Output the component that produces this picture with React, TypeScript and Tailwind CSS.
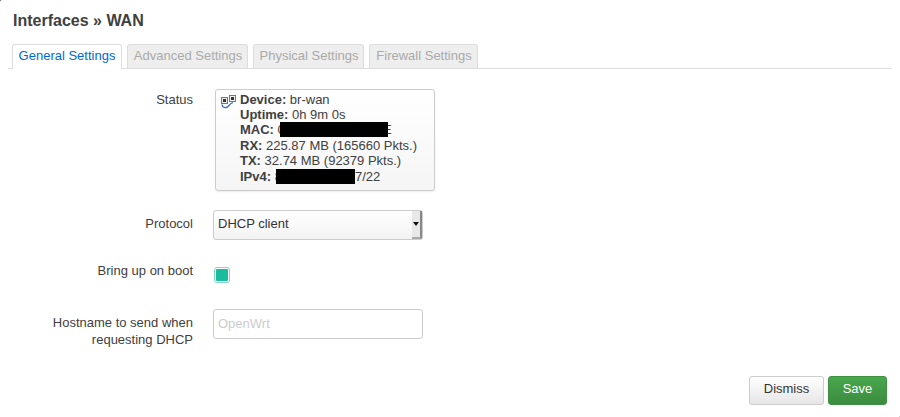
const labelClass = "w-[193px] shrink-0 text-right text-[#404040]";

const tabs = [
  { name: "Advanced Settings", width: "w-[121px]" },
  { name: "Physical Settings", width: "w-[111px]" },
  { name: "Firewall Settings", width: "w-[109px]" },
];

const NetIcon = () => (
  <svg width="16" height="16" viewBox="0 0 16 16" className="shrink-0">
    <rect x="0.5" y="3.5" width="6" height="6" fill="#e8e8e8" stroke="#777" />
    <rect x="2" y="5" width="3" height="3" fill="#333" />
    <rect x="8.5" y="1.5" width="6" height="6" fill="#f2f2f2" stroke="#777" />
    <rect x="10" y="3" width="3" height="3" fill="#333" />
    <path d="M1 10.5 C1.5 14.5 6 14.5 8.5 11 C9.5 9.5 10.5 9 12 8.5" fill="none" stroke="#3a6fc4" strokeWidth="1.3" />
  </svg>
);

const Redacted = ({ className }: { className: string }) => (
  <span className={`absolute h-[15px] bg-black ${className}`} />
);

export default function App() {
  return (
    <div className="h-[417px] w-[900px] overflow-hidden bg-[#555]">
      <div className="h-[417px] w-[900px] rounded-tl-[2px] rounded-br-[1px] bg-white font-['Liberation_Sans',sans-serif] text-[13px] text-[#404040]">
        <div className="px-2 pt-[12px]">
          <h3 className="pl-[5px] text-[16px] leading-[17px] font-bold">Interfaces » WAN</h3>

          <div className="mt-[15px] flex h-[25px] items-end gap-[5px] border-b border-[#ddd] pl-1">
            <div className="-mb-px flex h-[25px] w-[110px] items-center justify-center rounded-t-[3px] border border-b-0 border-[#ddd] bg-white pb-[2px] text-[#0069d6]">
              General Settings
            </div>
            {tabs.map((tab) => (
              <div
                key={tab.name}
                className={`flex h-[24px] items-center justify-center rounded-t-[3px] border border-b-0 border-[#ddd] bg-[#eee] pb-[1px] pl-[1px] text-[#aaa] ${tab.width}`}
              >
                {tab.name}
              </div>
            ))}
          </div>
        </div>

        <div className="mt-[20px] flex items-start">
          <div className={`${labelClass} pt-[2px] leading-[18px]`}>Status</div>
          <div className="ml-[22px] flex h-[102px] w-[220px] gap-[3px] rounded-[3px] border border-[#ccc] bg-linear-to-b from-white to-[#f5f5f5] pl-[5px] shadow-[0_1px_2px_rgba(0,0,0,0.08)]">
            <div className="pt-[4px]">
              <NetIcon />
            </div>
            <div className="pt-[1.6px] leading-[15.4px]">
              <div>
                <b>Device:</b> br-wan
              </div>
              <div>
                <b>Uptime:</b> 0h 9m 0s
              </div>
              <div className="relative">
                <b>MAC:</b> 0
                <span className="absolute left-[143px] top-0">E</span>
                <Redacted className="left-[40px] top-0 w-[108px]" />
              </div>
              <div>
                <b>RX:</b> 225.87 MB (165660 Pkts.)
              </div>
              <div>
                <b>TX:</b> 32.74 MB (92379 Pkts.)
              </div>
              <div className="relative">
                <b>IPv4:</b> 8
                <Redacted className="left-[36px] top-0 w-[79px]" />
                <span className="absolute left-[115px] top-0">7/22</span>
              </div>
            </div>
          </div>
        </div>

        <div className="mt-[19px] flex items-center">
          <div className={`${labelClass} pb-[2px]`}>Protocol</div>
          <div className="ml-[20px] flex h-[30px] w-[210px] items-center rounded-[3px] border border-[#ccc] bg-linear-to-b from-white to-[#f3f3f3] pl-[4px] text-[#333]">
            <span className="flex-1 pb-[3px]">DHCP client</span>
            <span className="flex h-[28px] w-[10px] items-center justify-center border-r-2 border-b-2 border-r-[#888] border-b-[#aaa] bg-[#e8e8e8]">
              <svg width="6" height="4" viewBox="0 0 6 4">
                <path d="M0 0H6L3 4Z" fill="#111" />
              </svg>
            </span>
          </div>
        </div>

        <div className="mt-[22px] flex items-start">
          <div className={`${labelClass} pt-[1px] leading-[16px]`}>Bring up on boot</div>
          <div className="ml-[21px] mt-[5px] flex h-[16px] w-[16px] items-center justify-center rounded-[3px] border border-[#7fd8c6] bg-white">
            <span className="h-[12px] w-[12px] rounded-[1px] bg-[#1abc9c]" />
          </div>
        </div>

        <div className="mt-[26px] flex items-start">
          <div className={`${labelClass} pt-[5px] leading-[17px]`}>
            Hostname to send when
            <br />
            requesting DHCP
          </div>
          <div className="ml-[20px] flex h-[30px] w-[210px] items-center rounded-[3px] border border-[#ccc] bg-white pl-[4px] text-[#ccc]">
            OpenWrt
          </div>
        </div>

        <div className="mt-[28px] flex justify-end gap-[4px] pr-[13px]">
          <button className="h-[29px] w-[75px] rounded-[3px] border border-[#ccc] bg-linear-to-b from-white to-[#e6e6e6] pb-[3px] text-[#333]">
            Dismiss
          </button>
          <button className="h-[29px] w-[59px] rounded-[3px] border border-[#3f9142] bg-linear-to-b from-[#48a84c] to-[#3d8b40] pb-[3px] text-white">
            Save
          </button>
        </div>
      </div>
    </div>
  );
}
